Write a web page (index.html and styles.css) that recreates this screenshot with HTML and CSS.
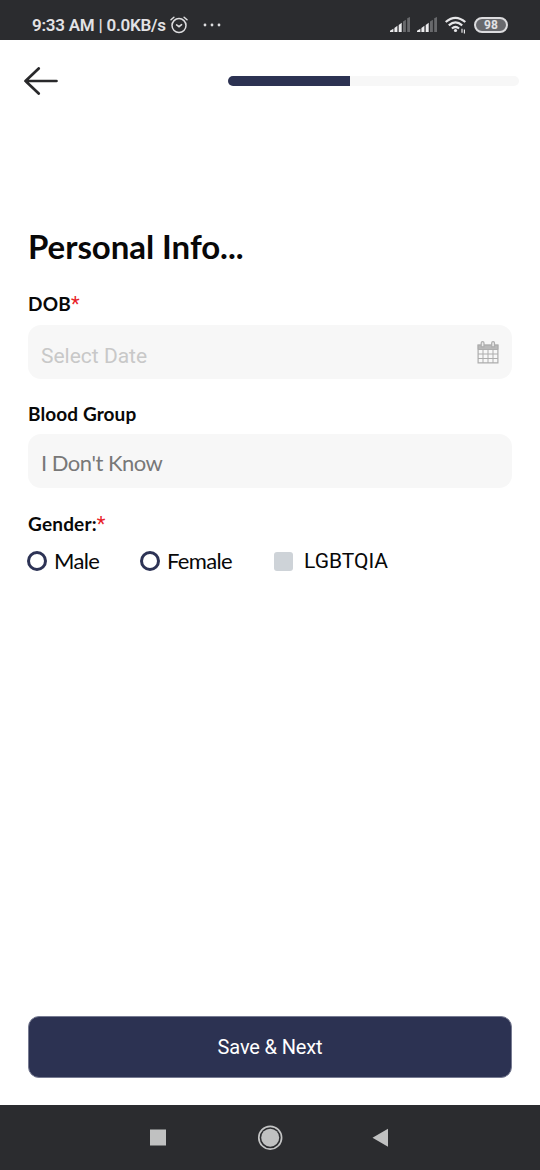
FILE: index.html
```html
<!DOCTYPE html>
<html lang="en">
<head>
<meta charset="utf-8">
<title>Personal Info</title>
<link rel="stylesheet" href="styles.css">
</head>
<body>
<div class="screen">
  <header class="status">
    <span class="clock">9:33 AM | 0.0KB/s</span>
    <svg class="alarm" width="18" height="18" viewBox="0 0 18 18" fill="none" stroke="#dedee0" stroke-width="1.5" stroke-linecap="round"><circle cx="9" cy="9.6" r="7"/><path d="M1 3.7 3.9 1.2M17 3.7 14.1 1.2M6.6 8.9 9 10.7 11.6 8.6"/></svg>
    <svg class="more" width="18" height="4" viewBox="0 0 18 4" fill="#dedee0"><circle cx="2" cy="2" r="1.4"/><circle cx="9" cy="2" r="1.4"/><circle cx="16" cy="2" r="1.4"/></svg>
    <div class="status-right">
      <svg class="signal" width="21" height="16" viewBox="0 0 21 16"><path fill="#ececee" d="M0 13.800 3.400 11.800V15H0zM4.400 11 7.400 8.800V15h-3zM8.700 8 11.700 5.800V15h-3z"/><path fill="#68696c" d="M13 4.500 15.900 2.800V15H13zM17.200 1.300 20 0v15h-2.800z"/></svg>
      <svg class="signal" width="21" height="16" viewBox="0 0 21 16"><path fill="#ececee" d="M0 13.800 3.400 11.800V15H0zM4.400 11 7.400 8.800V15h-3zM8.700 8 11.700 5.800V15h-3z"/><path fill="#68696c" d="M13 4.500 15.900 2.800V15H13zM17.200 1.300 20 0v15h-2.800z"/></svg>
      <svg class="wifi" width="22" height="18" viewBox="0 0 22 18" fill="none" stroke="#e6e6e8" stroke-width="2.200"><path d="M.7 6Q10.500-2.400 20.300 6M3.800 9.300Q10.500 3.600 17.200 9.300M6.900 12.500Q10.500 9.500 14.100 12.500"/><circle cx="10.500" cy="14.500" r="1.600" fill="#e6e6e8" stroke="none"/><path stroke-width="1.200" d="M17 12.800v4M19.400 13.500v4"/></svg>
      <span class="battery">98</span>
    </div>
  </header>
  <nav class="topbar">
    <svg class="back" width="34" height="28" viewBox="0 0 34 28" fill="none" stroke="#29292b" stroke-width="2.700" stroke-linecap="round" stroke-linejoin="round"><path d="M32.500 14H1.500M14.700 1.400 1.500 14 14.700 26.600"/></svg>
    <div class="progress"><div class="progress-fill" style="width:42%"></div></div>
  </nav>
  <main class="form">
    <h1 class="title">Personal Info...</h1>
    <div class="label dob">DOB<span class="required">*</span></div>
    <div class="field date"><span>Select Date</span>
      <svg width="22" height="23" viewBox="0 0 22 23" fill="none" stroke="#adadad"><path fill="#b9b9b9" stroke="none" d="M.500 3.500h21v5h-21z"/><path stroke-width="1.200" d="M1.100 4.100h19.800v17.800H1.100z"/><path d="M1 8.500h20M1 13h20M1 17.500h20M6 8.500V22M11 8.500V22M16 8.500V22"/><path fill="#e9e9e9" stroke-width="1.200" d="M4.200 5.800V2q0-1.300 1.400-1.300T7 2v3.800zM14.700 5.800V2q0-1.300 1.400-1.300T17.500 2v3.800z"/></svg>
    </div>
    <div class="label">Blood Group</div>
    <div class="field blood">I Don't Know</div>
    <div class="label gender">Gender:<span class="required">*</span></div>
    <div class="options">
      <span class="option male"><i class="radio"></i>Male</span>
      <span class="option female"><i class="radio"></i>Female</span>
      <span class="option other"><i class="check"></i>LGBTQIA</span>
    </div>
    <div class="save">Save &amp; Next</div>
  </main>
  <footer class="navbar">
    <svg width="540" height="65" viewBox="0 0 540 65"><path fill="#c0c1c1" d="M150 24.500h16v16h-16zM372.500 32.700 388 23.700v18z"/><circle cx="270.200" cy="32.700" r="11.400" fill="none" stroke="#c4c5c5" stroke-width="1.700"/><circle cx="270.200" cy="32.700" r="9" fill="#c0c1c1"/></svg>
  </footer>
</div>
</body>
</html>
```
FILE: styles.css
```css
* { box-sizing: border-box; }
body { margin: 0; background: #fff; }
svg { display: block; flex: none; }
.screen { width: 540px; height: 1170px; display: flex; flex-direction: column; font-family: Lato, sans-serif; color: #080808; }
.status { height: 40px; background: #2b2c2f; color: #e2e2e5; display: flex; align-items: center; padding: 10px 32px 0; }
.clock { font: 600 17px/20px Roboto, sans-serif; width: 134px; white-space: nowrap; letter-spacing: -0.25px; }
.alarm { margin-left: 4px; }
.more { margin-left: 15px; }
.status-right { margin-left: auto; display: flex; align-items: center; }
.signal { margin-right: 6px; }
.wifi { margin-left: 1px; }
.battery { width: 34px; height: 16px; margin-left: 7px; border: 2px solid #dcdcde; border-radius: 8px; background: #68696d; font: 700 12px/13px Roboto, sans-serif; text-align: center; }
.topbar { height: 82px; display: flex; justify-content: space-between; align-items: center; padding: 0 21px 0 24px; }
.progress { width: 291px; height: 10px; border-radius: 5px; overflow: hidden; background: #f7f7f7; }
.progress-fill { height: 100%; background: #2c3252; }
.form { flex: 1; display: flex; flex-direction: column; padding: 102px 28px 27px; }
.title { margin: 0; font-size: 33px; line-height: 44px; font-weight: 700; letter-spacing: -0.05px; }
.label { font-size: 19px; line-height: 24px; height: 24px; font-weight: 700; margin-top: 23px; letter-spacing: 0.1px; }
.dob { margin-top: 24px; letter-spacing: 0.2px; }
.gender { letter-spacing: 0.2px; margin-top: 24px; }
.required { color: #e82228; font: 400 20px/20px Roboto, sans-serif; letter-spacing: 0; }
.field { height: 54px; margin-top: 9px; border-radius: 13px; background: #f7f7f7; display: flex; align-items: center; justify-content: space-between; padding: 0 13px; }
.date { color: #c8c8c8; font: 400 21px/26px Roboto, sans-serif; }
.date span { padding-top: 8px; }
.label + .blood { margin-top: 8px; }
.blood { color: #787878; font-size: 22px; padding-top: 2px; letter-spacing: -0.5px; }
.options { display: flex; font-size: 22px; line-height: 26px; margin: 12px 0 0 -1px; letter-spacing: -0.65px; }
.option { display: flex; align-items: center; }
.radio { width: 20px; height: 20px; border: 3px solid #2d3355; border-radius: 50%; margin-right: 7px; }
.male { width: 113px; }
.female { width: 134px; }
.other { font-family: Roboto, sans-serif; font-size: 21px; letter-spacing: 0; }
.check { width: 19px; height: 19px; border-radius: 3px; background: #ced3d8; margin-right: 11px; }
.save { margin-top: auto; height: 62px; border: 1px solid #777b92; border-radius: 11px; background: #2c3252; color: #fff; font: 400 20px/60px Roboto, sans-serif; letter-spacing: -0.15px; text-align: center; }
.navbar { height: 65px; background: #2b2c2f; }
```
